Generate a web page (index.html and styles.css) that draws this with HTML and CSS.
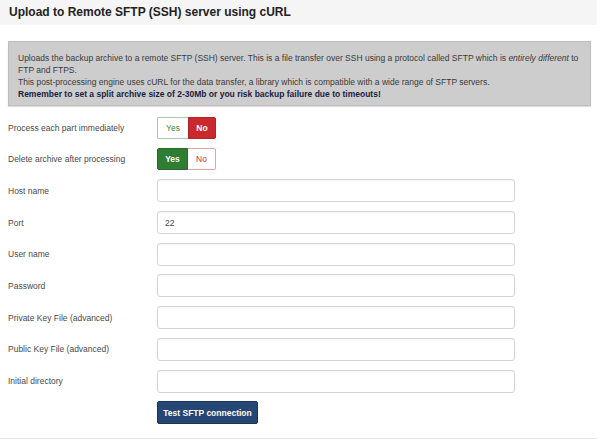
FILE: index.html
```html
<!DOCTYPE html>
<html>
<head>
<meta charset="utf-8">
<link rel="stylesheet" href="styles.css">
</head>
<body>
<div class="page">
  <div class="header">Upload to Remote SFTP (SSH) server using cURL</div>
  <div class="info">
    <p>Uploads the backup archive to a remote SFTP (SSH) server. This is a file transfer over SSH using a protocol called SFTP which is <em>entirely different</em> to FTP and FTPS.</p>
    <p>This post-processing engine uses cURL for the data transfer, a library which is compatible with a wide range of SFTP servers.</p>
    <p><strong>Remember to set a split archive size of 2-30Mb or you risk backup failure due to timeouts!</strong></p>
  </div>
  <div class="form">
    <div class="row">
      <label class="label">Process each part immediately</label>
      <div class="toggle">
        <span class="opt yes">Yes</span><span class="opt no active">No</span>
      </div>
    </div>
    <div class="row">
      <label class="label">Delete archive after processing</label>
      <div class="toggle">
        <span class="opt yes active">Yes</span><span class="opt no">No</span>
      </div>
    </div>
    <div class="row"><label class="label">Host name</label><div class="input"></div></div>
    <div class="row"><label class="label">Port</label><div class="input">22</div></div>
    <div class="row"><label class="label">User name</label><div class="input"></div></div>
    <div class="row"><label class="label">Password</label><div class="input"></div></div>
    <div class="row"><label class="label">Private Key File (advanced)</label><div class="input"></div></div>
    <div class="row"><label class="label">Public Key File (advanced)</label><div class="input"></div></div>
    <div class="row"><label class="label">Initial directory</label><div class="input"></div></div>
    <div class="row"><span class="label"></span><button class="btn">Test SFTP connection</button></div>
  </div>
</div>
</body>
</html>
```
FILE: styles.css
```css
html, body {
  margin: 0;
  padding: 0;
  background: #ffffff;
}
body {
  font-family: "Liberation Sans", Arial, sans-serif;
  color: #333;
}
.page {
  width: 597px;
  height: 439px;
  border-bottom: 1px solid #e6e6e6;
  box-sizing: border-box;
}
.header {
  height: 25px;
  background: #f5f5f5;
  box-sizing: border-box;
  padding: 5px 9px 0;
  font-size: 12px;
  font-weight: bold;
  color: #222;
}
.info {
  margin: 16px 6px 0 8px;
  background: #cdcdcd;
  border: 1px solid #bdbdbd;
  box-shadow: 0 1px 1px rgba(0,0,0,0.12);
  padding: 10px 9px 5px 9px;
  font-size: 8.5px;
  line-height: 12px;
  color: #3a3a3a;
}
.info p { margin: 0; }
.info strong { color: #1a2140; }
.form {
  display: flex;
  flex-direction: column;
  gap: 8.7px;
  margin-top: 10px;
  padding-left: 8px;
}
.row {
  display: flex;
  align-items: center;
  height: 23px;
}
.label {
  width: 149px;
  font-size: 8.5px;
  color: #4a4a4a;
}
.toggle {
  display: flex;
  height: 22px;
}
.opt {
  display: flex;
  align-items: center;
  justify-content: center;
  font-size: 8.5px;
  box-sizing: border-box;
  height: 22px;
}
.opt.yes {
  width: 31px;
  border: 1px solid #a9c9a9;
  border-right: none;
  border-radius: 2px 0 0 2px;
  color: #3b8a3b;
}
.opt.no {
  width: 28px;
  border: 1px solid #e3a3a3;
  border-left: none;
  border-radius: 0 2px 2px 0;
  color: #c0393b;
}
.opt.yes.active {
  background: #2e7d32;
  border: 1px solid #256a28;
  color: #fff;
  font-weight: bold;
}
.opt.no.active {
  background: #c9282d;
  border: 1px solid #b22226;
  color: #fff;
  font-weight: bold;
}
.input {
  width: 358px;
  height: 23px;
  box-sizing: border-box;
  border: 1px solid #d4d4d4;
  border-radius: 3px;
  box-shadow: inset 0 1px 1px rgba(0,0,0,0.04);
  font-size: 8.5px;
  color: #444;
  padding: 0 7px;
  display: flex;
  align-items: center;
}
.btn {
  width: 101px;
  height: 23px;
  background: #264673;
  border: 1px solid #1b3456;
  border-radius: 2px;
  color: #fff;
  font-family: "Liberation Sans", Arial, sans-serif;
  font-weight: bold;
  font-size: 8.5px;
  padding: 0;
}
```
